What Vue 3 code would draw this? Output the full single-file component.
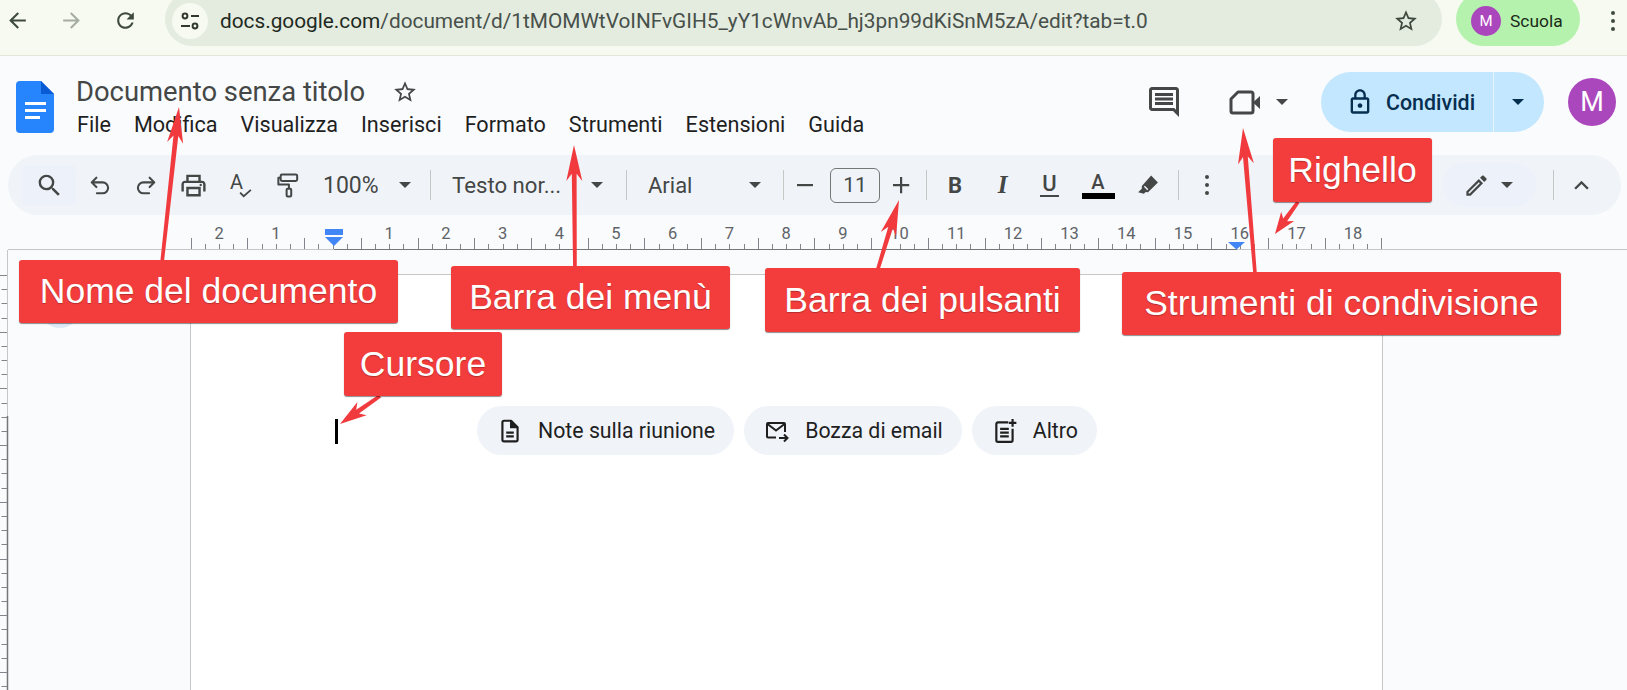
<template>
  <div class="screen">
    <!-- barra del browser -->
    <div class="browser">
      <button class="nav"><svg viewBox="0 0 24 24" width="25" height="25"><path fill="#3f4a3e" d="M20 11H7.83l5.59-5.59L12 4l-8 8 8 8 1.41-1.41L7.83 13H20v-2z"/></svg></button>
      <button class="nav"><svg viewBox="0 0 24 24" width="25" height="25"><path fill="#a6aca3" d="M12 4l-1.41 1.41L16.17 11H4v2h12.17l-5.58 5.59L12 20l8-8z"/></svg></button>
      <button class="nav"><svg viewBox="0 0 24 24" width="25" height="25"><path fill="#3f4a3e" d="M17.65 6.35C16.2 4.9 14.21 4 12 4c-4.42 0-7.99 3.58-7.99 8s3.57 8 7.99 8c3.73 0 6.84-2.55 7.73-6h-2.08c-.82 2.33-3.04 4-5.65 4-3.31 0-6-2.69-6-6s2.69-6 6-6c1.66 0 3.14.69 4.22 1.78L13 11h7V4l-2.35 2.35z"/></svg></button>
      <div class="omnibox">
        <span class="site-info">
          <svg viewBox="0 0 22 22" width="22" height="22" fill="none" stroke="#30382f" stroke-width="2"><circle cx="6" cy="6" r="2.4"/><path d="M12 6h8M2 16h9"/><circle cx="16" cy="16" r="2.4"/></svg>
        </span>
        <span class="url"><b>docs.google.com</b>/document/d/1tMOMWtVoINFvGIH5_yY1cWnvAb_hj3pn99dKiSnM5zA/edit?tab=t.0</span>
        <svg class="url-star" viewBox="0 0 24 24" width="26" height="26"><path fill="#3f4a3e" d="M22 9.24l-7.19-.62L12 2 9.19 8.63 2 9.24l5.46 4.73L5.82 21 12 17.27 18.18 21l-1.63-7.03L22 9.24zM12 15.4l-3.76 2.27 1-4.28-3.32-2.88 4.38-.38L12 6.1l1.71 4.04 4.38.38-3.32 2.88 1 4.28L12 15.4z"/></svg>
      </div>
      <div class="profile"><span class="profile-m">M</span><span>Scuola</span></div>
      <div class="kebab"><i></i><i></i><i></i></div>
    </div>

    <!-- intestazione documento -->
    <div class="docs-header">
      <svg class="docs-logo" viewBox="0 0 38 52" width="38" height="52">
        <path fill="#2684fc" d="M4 0h21l13 13v35a4 4 0 0 1-4 4H4a4 4 0 0 1-4-4V4a4 4 0 0 1 4-4z"/>
        <path fill="#0a5bd3" d="M25 0l13 13H25z"/>
        <path fill="#fff" d="M9 21h21v3H9zM9 28h21v3H9zM9 35h15v3H9z"/>
      </svg>
      <div class="title-block">
        <div class="title-row">
          <span class="doc-title">Documento senza titolo</span>
          <svg viewBox="0 0 24 24" width="26" height="26"><path fill="#444746" d="M22 9.24l-7.19-.62L12 2 9.19 8.63 2 9.24l5.46 4.73L5.82 21 12 17.27 18.18 21l-1.63-7.03L22 9.24zM12 15.4l-3.76 2.27 1-4.28-3.32-2.88 4.38-.38L12 6.1l1.71 4.04 4.38.38-3.32 2.88 1 4.28L12 15.4z"/></svg>
        </div>
        <div class="menu">
          <span v-for="item in menuItems" :key="item">{{ item }}</span>
        </div>
      </div>
      <div class="header-right">
        <svg viewBox="0 0 24 24" width="36" height="36"><path fill="#444746" d="M21.99 4c0-1.1-.89-2-1.99-2H4c-1.1 0-2 .9-2 2v12c0 1.1.9 2 2 2h14l4 4-.01-18zM20 4v13.17L18.83 16H4V4h16zM6 12h12v2H6zm0-3h12v2H6zm0-3h12v2H6z"/></svg>
        <div class="meet">
          <svg viewBox="0 0 32 25" width="32" height="25">
            <path fill="none" stroke="#444746" stroke-width="3" stroke-linejoin="round" d="M9 2h13a2 2 0 0 1 2 2v17a2 2 0 0 1-2 2H4a2 2 0 0 1-2-2V9z"/>
            <path fill="#444746" d="M24 12.5L31 6v13z"/>
          </svg>
          <span class="caret"></span>
        </div>
        <div class="share">
          <div class="share-main">
            <svg viewBox="0 0 24 24" width="28" height="28"><path fill="#062e4f" d="M18 8h-1V6c0-2.76-2.24-5-5-5S7 3.24 7 6v2H6c-1.1 0-2 .9-2 2v10c0 1.1.9 2 2 2h12c1.1 0 2-.9 2-2V10c0-1.1-.9-2-2-2zM9 6c0-1.66 1.34-3 3-3s3 1.34 3 3v2H9V6zm9 14H6V10h12v10zm-6-3c1.1 0 2-.9 2-2s-.9-2-2-2-2 .9-2 2 .9 2 2 2z"/></svg>
            <span>Condividi</span>
          </div>
          <div class="share-drop"><span class="caret dark"></span></div>
        </div>
        <div class="avatar">M</div>
      </div>
    </div>

    <!-- barra degli strumenti -->
    <div class="toolbar">
      <button class="tb search-btn"><svg viewBox="0 0 24 24" width="29" height="29"><path fill="#444746" d="M15.5 14h-.79l-.28-.27A6.471 6.471 0 0 0 16 9.5 6.5 6.5 0 1 0 9.5 16c1.61 0 3.09-.59 4.23-1.57l.27.28v.79l5 4.99L20.49 19l-4.99-5zm-6 0C7.01 14 5 11.99 5 9.5S7.01 5 9.5 5 14 7.01 14 9.5 11.99 14 9.5 14z"/></svg></button>
      <button class="tb"><svg viewBox="0 0 24 24" width="25" height="25" fill="none" stroke="#444746" stroke-width="2" stroke-linecap="round" stroke-linejoin="round"><path d="M9 13.5L4.5 9 9 4.5M5 9h10a4.8 4.8 0 0 1 0 10.500H9.500"/></svg></button>
      <button class="tb"><svg viewBox="0 0 24 24" width="25" height="25" fill="none" stroke="#444746" stroke-width="2" stroke-linecap="round" stroke-linejoin="round"><path d="M15 13.500L19.500 9 15 4.500M19 9H9a4.800 4.800 0 0 0 0 10.500h5.500"/></svg></button>
      <button class="tb"><svg viewBox="0 0 24 24" width="29" height="29"><path fill="#444746" d="M19 8h-1V3H6v5H5c-1.660 0-3 1.340-3 3v6h4v4h12v-4h4v-6c0-1.660-1.340-3-3-3zM8 5h8v3H8V5zm8 14H8v-4h8v4zm2-2v-4H6v4H4v-6c0-.55.45-1 1-1h14c.55 0 1 .45 1 1v6h-2z"/><circle fill="#444746" cx="18" cy="11.500" r="1"/></svg></button>
      <button class="tb spell"><span>A</span><svg viewBox="0 0 14 10" width="13" height="9" fill="none" stroke="#444746" stroke-width="2"><path d="M1 4l4 4 8-7"/></svg></button>
      <button class="tb"><svg viewBox="0 0 24 27" width="22" height="25" fill="none" stroke="#444746" stroke-width="2.2" stroke-linejoin="round"><rect x="4" y="1.500" width="18" height="7" rx="1.500"/><path d="M4 5H1.500v7.500H13v4"/><rect x="10.500" y="17" width="5" height="8.500" rx="1.200"/></svg></button>
      <div class="select zoom-sel"><span>100%</span><span class="caret"></span></div>
      <span class="sep"></span>
      <div class="select style-sel"><span>Testo nor...</span><span class="caret"></span></div>
      <span class="sep"></span>
      <div class="select font-sel"><span>Arial</span><span class="caret"></span></div>
      <span class="sep"></span>
      <button class="tb minus"><svg viewBox="0 0 20 20" width="20" height="20"><path fill="#444746" d="M2 9h16v2.200H2z"/></svg></button>
      <div class="size-box">11</div>
      <button class="tb plus"><svg viewBox="0 0 20 20" width="20" height="20"><path fill="#444746" d="M2 9h7V2h2.200v7h7v2.200h-7v7H9v-7H2z"/></svg></button>
      <span class="sep narrow"></span>
      <button class="tb fmt bold">B</button>
      <button class="tb fmt ital">I</button>
      <button class="tb fmt under"><span>U</span></button>
      <button class="tb fmt color"><span>A</span></button>
      <button class="tb ink"><svg viewBox="0 0 24 24" width="25" height="25"><path fill="#444746" d="M15.500 2.500l6.500 6.500-9.500 9.500-2.200-.2-1.800 1.700-5.500-1.500 3.500-3.500.1-2.600z"/><path fill="#f0f4f9" d="M8.500 13.200l1-1 3.300 3.300-1 1z"/></svg></button>
      <span class="sep"></span>
      <button class="tb dots"><i></i><i></i><i></i></button>
      <div class="toolbar-right">
        <div class="mode"><svg viewBox="0 0 24 24" width="27" height="27"><path fill="#444746" d="M3 17.250V21h3.750L17.810 9.940l-3.750-3.750L3 17.250zM5.920 19H5v-.92l9.060-9.060.92.92L5.920 19zM20.710 5.630l-2.340-2.340c-.2-.2-.45-.29-.71-.29s-.51.1-.7.29l-1.830 1.830 3.750 3.750 1.830-1.830c.39-.39.39-1.020 0-1.410z"/></svg><span class="caret"></span></div>
        <span class="sep last"></span>
        <button class="tb collapse"><svg viewBox="0 0 24 24" width="29" height="29"><path fill="#444746" d="M12 8l-6 6 1.410 1.410L12 10.830l4.590 4.580L18 14z"/></svg></button>
      </div>
    </div>

    <!-- righello orizzontale -->
    <svg class="ruler" width="1627" height="35" viewBox="0 0 1627 35">
      <line x1="8" x2="1627" y1="34.500" y2="34.500" stroke="#c4c7c5"/>
      <line x1="334" x2="1237" y1="34.500" y2="34.500" stroke="#747775"/>
      <line v-for="t in rulerTicks" :key="t.x" :x1="t.x" :x2="t.x" :y1="34 - t.len" y2="34" stroke="#80868b"/>
      <text v-for="l in rulerLabels" :key="l.x" :x="l.x" y="24" text-anchor="middle" class="ruler-num">{{ l.text }}</text>
      <rect x="325" y="14" width="18" height="6" fill="#4285f4"/>
      <path d="M325 22h18l-9 9z" fill="#4285f4"/>
      <path d="M1228 27h17l-8.500 7.500z" fill="#4285f4"/>
    </svg>

    <!-- area di lavoro -->
    <div class="workspace">
      <div class="gutter">
        <svg class="v-ruler" width="9" height="441" viewBox="0 0 9 441">
          <line x1="7.500" x2="7.500" y1="0" y2="166" stroke="#c4c7c5" stroke-width="1"/>
          <line x1="7.500" x2="7.500" y1="166" y2="441" stroke="#747775" stroke-width="1.500"/>
          <line v-for="t in verticalTicks" :key="t.y" :x1="t.x" x2="7" :y1="t.y" :y2="t.y" stroke="#80868b"/>
        </svg>
        <span class="outline-btn"></span>
      </div>
      <div class="page">
        <span class="cursor"></span>
        <div class="chips">
          <div class="chip">
            <svg viewBox="0 0 24 24" width="26" height="26" fill="none" stroke="#1f1f1f" stroke-width="2"><path stroke-linejoin="round" d="M6.500 2.500H13L19 8.500V20a1.500 1.500 0 0 1-1.500 1.500h-11A1.500 1.500 0 0 1 5 20V4a1.500 1.500 0 0 1 1.500-1.500z"/><path d="M13 2.500v6h6" fill="#1f1f1f"/><path d="M8.500 13.500h7M8.500 17h7"/></svg>
            <span>Note sulla riunione</span>
          </div>
          <div class="chip">
            <svg viewBox="0 0 26 24" width="26" height="24" fill="none" stroke="#1f1f1f" stroke-width="2"><path d="M12 18.500H4a1 1 0 0 1-1-1V5a1 1 0 0 1 1-1h16a1 1 0 0 1 1 1v8"/><path d="M3.500 5l8.500 6.500L20.500 5"/><path d="M15 19h8M20 15.500l3.500 3.500-3.500 3.500"/></svg>
            <span>Bozza di email</span>
          </div>
          <div class="chip">
            <svg viewBox="0 0 24 24" width="26" height="26" fill="none" stroke="#1f1f1f" stroke-width="2"><path d="M15 4H5.500A1.500 1.500 0 0 0 4 5.500v15A1.500 1.500 0 0 0 5.500 22h12a1.500 1.500 0 0 0 1.500-1.500V10"/><path d="M7.500 10h8M7.500 13.500h8M7.500 17h8"/><path d="M19 1v7M15.500 4.500h7"/></svg>
            <span>Altro</span>
          </div>
        </div>
      </div>
    </div>

    <!-- annotazioni sopra lo screenshot -->
    <svg class="arrows" width="1627" height="690" viewBox="0 0 1627 690">
      <polygon v-for="(a, i) in arrowShapes" :key="i" :points="a" fill="#f03a3e"/>
    </svg>
    <div class="note n-nome">Nome del documento</div>
    <div class="note n-menu">Barra dei menù</div>
    <div class="note n-cursore">Cursore</div>
    <div class="note n-pulsanti">Barra dei pulsanti</div>
    <div class="note n-condiv">Strumenti di condivisione</div>
    <div class="note n-righello">Righello</div>
  </div>
</template>

<script setup>
import { computed } from 'vue';

const menuItems = ['File', 'Modifica', 'Visualizza', 'Inserisci', 'Formato', 'Strumenti', 'Estensioni', 'Guida'];

const ZERO = 332.5;
const CM = 56.7;

const rulerTicks = computed(() => {
  const ticks = [];
  for (let k = -10; k <= 74; k++) {
    const long = ((k % 4) + 4) % 4 === 2;
    ticks.push({ x: Math.round(ZERO + k * CM / 4) + 0.5, len: long ? 11 : 5 });
  }
  return ticks;
});

const rulerLabels = computed(() => {
  const labels = [];
  for (let n = -2; n <= 18; n++) {
    if (n !== 0) labels.push({ x: ZERO + n * CM, text: String(Math.abs(n)) });
  }
  return labels;
});

const verticalTicks = computed(() => {
  const ticks = [];
  for (let k = 0; k < 31; k++) {
    ticks.push({ y: Math.round(25 + k * CM / 4) + 0.5, x: k % 4 === 0 ? 0 : 1.5 });
  }
  return ticks;
});

// frecce rosse: coda -> punta
const arrows = [
  [162, 263, 179, 107],
  [575, 275, 574, 145],
  [877, 272, 899, 200],
  [1255, 273, 1243, 128],
  [1298, 202, 1275, 234],
  [380, 396, 340, 424]
];

const arrowShapes = computed(() => arrows.map(([x1, y1, x2, y2]) => {
  const len = Math.hypot(x2 - x1, y2 - y1);
  const ux = (x2 - x1) / len, uy = (y2 - y1) / len;
  const px = -uy, py = ux;
  const head = Math.min(36, len * 0.55);
  const at = (along, side) => `${(x1 + ux * along + px * side).toFixed(1)},${(y1 + uy * along + py * side).toFixed(1)}`;
  return [
    at(0, -1.8), at(len - head * 0.8, -2.4), at(len - head, -8), at(len, 0),
    at(len - head, 8), at(len - head * 0.8, 2.4), at(0, 1.8)
  ].join(' ');
}));
</script>

<style>
html, body { background: #fff; overflow: hidden; }
</style>

<style scoped>
.screen {
  position: relative;
  width: 1627px;
  height: 690px;
  overflow: hidden;
  background: #f9fbfd;
  font-family: Roboto, "Liberation Sans", sans-serif;
  color: #1f1f1f;
}
button { border: 0; background: none; padding: 0; font: inherit; color: inherit; }
i { display: block; }

/* browser */
.browser {
  display: flex;
  align-items: flex-start;
  height: 55px;
  box-sizing: content-box;
  background: #f7faf1;
  border-bottom: 1px solid #e3e8d9;
  overflow: hidden;
}
.nav {
  width: 54px;
  height: 41px;
  flex: none;
  display: flex;
  align-items: center;
  justify-content: center;
}
.nav:first-child { margin-left: -10px; }
.omnibox {
  margin-left: 13px;
  margin-top: -8px;
  width: 1277px;
  height: 54px;
  border-radius: 27px;
  background: #e4ebdf;
  display: flex;
  align-items: center;
  flex: none;
  padding-top: 4px;
  box-sizing: border-box;
}
.site-info {
  width: 36px;
  height: 36px;
  margin-left: 7px;
  border-radius: 50%;
  background: #f7faf1;
  display: flex;
  align-items: center;
  justify-content: center;
  flex: none;
}
.url {
  margin-left: 12px;
  font-size: 20.8px;
  color: #47504a;
  white-space: nowrap;
}
.url b { font-weight: 400; color: #1f2a1f; }
.url-star { margin-left: auto; margin-right: 23px; }
.profile {
  margin-left: 14px;
  margin-top: -8px;
  width: 124px;
  height: 54px;
  border-radius: 27px;
  background: #b5f2ad;
  display: flex;
  align-items: center;
  flex: none;
  padding-top: 4px;
  padding-left: 15px;
  box-sizing: border-box;
  font-size: 17.4px;
  color: #1a2a18;
}
.profile-m {
  width: 30px;
  height: 30px;
  margin-right: 9px;
  border-radius: 50%;
  background: #ab47bc;
  color: #fff;
  display: flex;
  align-items: center;
  justify-content: center;
  font-size: 15px;
}
.kebab {
  margin-left: 31px;
  margin-top: 11px;
  display: flex;
  flex-direction: column;
  gap: 4px;
}
.kebab i { width: 4px; height: 4px; border-radius: 50%; background: #3f4a3e; }

/* intestazione docs */
.docs-header {
  display: flex;
  height: 94px;
  box-sizing: border-box;
  padding: 16px 0 0 16px;
}
.docs-logo { margin-top: 9px; flex: none; }
.title-block { margin-left: 22px; }
.title-row { display: flex; align-items: center; gap: 27px; height: 40px; }
.doc-title { font-size: 27.4px; color: #444746; white-space: nowrap; }
.menu { display: flex; gap: 23px; margin-top: 0; font-size: 21.6px; line-height: 26px; margin-left: 1px; white-space: nowrap; }
.header-right {
  margin-left: auto;
  padding-right: 11px;
  display: flex;
  align-items: center;
  height: 60px;
}
.meet { display: flex; align-items: center; margin-left: 47px; gap: 15px; }
.caret {
  display: block;
  width: 0;
  height: 0;
  border-left: 6.500px solid transparent;
  border-right: 6.500px solid transparent;
  border-top: 6.500px solid #444746;
  flex: none;
}
.caret.dark { border-top-color: #062e4f; }
.share {
  margin-left: 33px;
  display: flex;
  height: 60px;
  border-radius: 30px;
  background: #c2e7ff;
  width: 223px;
  color: #062e4f;
  font-size: 21.4px;
  font-weight: 500;
}
.share-main {
  display: flex;
  align-items: center;
  gap: 12px;
  padding-left: 25px;
  width: 173px;
  box-sizing: border-box;
  border-right: 1px solid #e8f5ff;
  white-space: nowrap;
}
.share-drop { flex: 1; display: flex; align-items: center; justify-content: center; padding-right: 2px; }
.avatar {
  margin-left: 24px;
  width: 48px;
  height: 48px;
  border-radius: 50%;
  background: #ab47bc;
  color: #fff;
  font-size: 27px;
  display: flex;
  align-items: center;
  justify-content: center;
}

/* toolbar */
.toolbar {
  margin: 5px 6px 0 8px;
  height: 60px;
  border-radius: 30px;
  background: #f0f4f9;
  display: flex;
  align-items: center;
  padding-left: 14px;
  padding-right: 12px;
  font-size: 21px;
  color: #444746;
}
.tb {
  width: 47px;
  height: 40px;
  flex: none;
  display: flex;
  align-items: center;
  justify-content: center;
}
.search-btn { width: 54px; background: #edf2fa; border-radius: 4px; }
.spell { position: relative; }
.spell span { position: absolute; left: 13px; top: 5px; font-size: 20px; }
.spell svg { position: absolute; left: 22px; top: 24px; }
.select { display: flex; align-items: center; flex: none; height: 40px; box-sizing: border-box; }
.select .caret { margin-left: auto; }
.zoom-sel { width: 113px; padding: 0 13px 0 12px; font-size: 23px; }
.style-sel { width: 183px; padding: 0 17px 0 15px; font-size: 22.2px; }
.font-sel { width: 144px; padding: 0 16px 0 15px; font-size: 22px; }
.sep { width: 1px; height: 30px; background: #c7c7c7; margin: 0 6px; flex: none; }
.sep.narrow { margin: 0 4px; }
.sep.last { margin: 0 0 0 16px; }
.minus { width: 30px; }
.size-box {
  margin-left: 10px;
  width: 50px;
  height: 35px;
  box-sizing: border-box;
  border: 1px solid #747775;
  border-radius: 6px;
  display: flex;
  align-items: center;
  justify-content: center;
  font-size: 21px;
  flex: none;
}
.plus { width: 42px; }
.fmt { font-size: 22px; }
.bold { width: 48px; font-weight: 700; }
.ital { font-family: "Liberation Serif", serif; font-style: italic; font-weight: 700; font-size: 25px; }
.under span { border-bottom: 2px solid #444746; line-height: 22px; padding: 0 2px; font-weight: 500; }
.color { width: 50px; }
.color span {
  width: 33px;
  border-bottom: 6px solid #000;
  line-height: 21px;
  text-align: center;
  font-size: 20px;
  font-weight: 500;
}
.ink { width: 49px; }
.dots { width: 44px; flex-direction: column; gap: 3.500px; }
.dots i { width: 4.500px; height: 4.500px; border-radius: 50%; background: #444746; }
.toolbar-right { margin-left: auto; display: flex; align-items: center; }
.mode {
  width: 95px;
  height: 44px;
  box-sizing: border-box;
  padding-right: 4px;
  border-radius: 22px;
  background: #edf2fa;
  display: flex;
  align-items: center;
  justify-content: center;
  gap: 11px;
}
.collapse { width: 55px; }

/* righello */
.ruler { display: block; }
.ruler-num { font-size: 16.5px; fill: #5f6368; font-family: Roboto, sans-serif; }

/* area documento */
.workspace { display: flex; height: 441px; }
.gutter { position: relative; width: 190px; flex: none; }
.v-ruler { display: block; }
.outline-btn {
  position: absolute;
  left: 40px;
  top: 38px;
  width: 40px;
  height: 40px;
  border-radius: 50%;
  background: #dfe9f5;
}
.page {
  margin-top: 24px;
  width: 1191px;
  flex: none;
  box-sizing: content-box;
  background: #fff;
  border: 1px solid #c7c7c7;
  border-bottom: 0;
  display: flex;
  align-items: flex-start;
  padding-top: 131px;
  height: 286px;
}
.cursor {
  width: 3px;
  height: 25px;
  margin-top: 13px;
  margin-left: 144px;
  background: #000;
  flex: none;
}
.chips { display: flex; gap: 10px; margin-left: 139px; }
.chip {
  display: flex;
  align-items: center;
  height: 49px;
  border-radius: 25px;
  background: #f0f4f9;
  padding: 0 19px 0 20px;
  gap: 15px;
  font-size: 21.3px;
  white-space: nowrap;
}

/* annotazioni */
.arrows { position: absolute; left: 0; top: 0; pointer-events: none; }
.note {
  position: absolute;
  background: #f33c3c;
  color: #fff;
  border-radius: 3px;
  box-shadow: 0 1px 1px rgba(0, 0, 0, 0.45);
  font-family: "Liberation Sans", Arial, sans-serif;
  font-size: 35.500px;
  display: flex;
  align-items: center;
  justify-content: center;
  white-space: nowrap;
  text-shadow: 0 1px 1px rgba(0, 0, 0, 0.25);
}
.n-nome { left: 19px; top: 260px; width: 379px; height: 63px; }
.n-menu { left: 451px; top: 266px; width: 279px; height: 63px; }
.n-cursore { left: 344px; top: 332px; width: 158px; height: 64px; }
.n-pulsanti { left: 765px; top: 268px; width: 315px; height: 64px; }
.n-condiv { left: 1122px; top: 272px; width: 439px; height: 63px; }
.n-righello { left: 1273px; top: 138px; width: 159px; height: 64px; }
</style>
